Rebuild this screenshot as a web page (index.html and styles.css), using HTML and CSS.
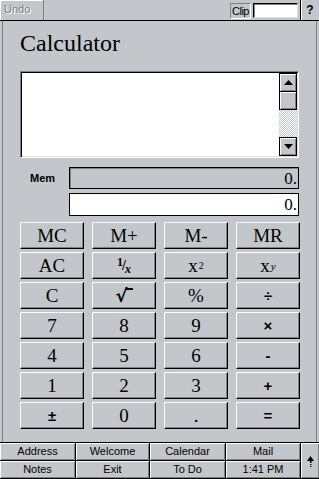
FILE: index.html
```html
<!DOCTYPE html>
<html>
<head>
<meta charset="utf-8">
<link rel="stylesheet" href="styles.css">
</head>
<body>
<div class="app">
  <div class="topbar">
    <div class="undo">Undo</div>
    <div class="spacer"></div>
    <div class="clip">Clip</div>
    <div class="clipbox"></div>
    <div class="help">?</div>
  </div>
  <div class="main">
    <h1 class="title">Calculator</h1>
    <div class="tape">
      <div class="tape-text"></div>
      <div class="scroll">
        <div class="sbtn"><svg width="9" height="5" viewBox="0 0 9 5"><polygon points="0,5 9,5 4.5,0" fill="#000"/></svg></div>
        <div class="sbtn thumb"></div>
        <div class="track"></div>
        <div class="sbtn"><svg width="9" height="5" viewBox="0 0 9 5"><polygon points="0,0 9,0 4.5,5" fill="#000"/></svg></div>
      </div>
    </div>
    <div class="memrow">
      <span class="memlabel">Mem</span>
      <div class="display mem">0.</div>
    </div>
    <div class="memrow second">
      <span class="memlabel"></span>
      <div class="display entry">0.</div>
    </div>
    <div class="keys">
      <div class="key">MC</div>
      <div class="key">M+</div>
      <div class="key">M-</div>
      <div class="key">MR</div>
      <div class="key">AC</div>
      <div class="key"><span class="frac"><span class="num">1</span><span class="sl">/</span><span class="den">x</span></span></div>
      <div class="key">x<sup class="pw">2</sup></div>
      <div class="key">x<sup class="pw it">y</sup></div>
      <div class="key">C</div>
      <div class="key"><span class="sqrt">√<span class="bar"></span></span></div>
      <div class="key">%</div>
      <div class="key op">÷</div>
      <div class="key">7</div>
      <div class="key">8</div>
      <div class="key">9</div>
      <div class="key op">×</div>
      <div class="key">4</div>
      <div class="key">5</div>
      <div class="key">6</div>
      <div class="key op">-</div>
      <div class="key">1</div>
      <div class="key">2</div>
      <div class="key">3</div>
      <div class="key op">+</div>
      <div class="key op">±</div>
      <div class="key">0</div>
      <div class="key">.</div>
      <div class="key op">=</div>
    </div>
  </div>
  <div class="bottombar">
    <div class="tab">Address</div>
    <div class="tab">Welcome</div>
    <div class="tab">Calendar</div>
    <div class="tab">Mail</div>
    <div class="tab arrow"><svg width="7" height="13" viewBox="0 0 7 13"><polygon points="0,5 7,5 3.5,0" fill="#000"/><rect x="3" y="5" width="1.5" height="2" fill="#000"/><rect x="3" y="8" width="1.5" height="1" fill="#000"/><rect x="3" y="10" width="1.5" height="1" fill="#000"/></svg></div>
    <div class="tab">Notes</div>
    <div class="tab">Exit</div>
    <div class="tab">To Do</div>
    <div class="tab">1:41 PM</div>
  </div>
</div>
</body>
</html>
```
FILE: styles.css
```css
* { box-sizing: border-box; }
html, body { margin: 0; padding: 0; }
body {
  width: 319px;
  height: 479px;
  overflow: hidden;
  background: #c3c7cb;
  font-family: "Liberation Sans", Arial, sans-serif;
  color: #000;
}
.app { display: flex; flex-direction: column; height: 479px; }

/* top bar */
.topbar {
  display: flex;
  height: 21px;
  border-bottom: 1px solid #000;
  flex: none;
}
.undo {
  width: 44px;
  border-right: 1px solid #808080;
  box-shadow: inset 1px 1px 0 #fff;
  font-size: 11px;
  line-height: 19px;
  padding-left: 4px;
  color: #808080;
  text-shadow: 1px 1px 0 #fff;
}
.spacer { flex: 1; }
.clip {
  width: 21px;
  height: 16px;
  margin-top: 3px;
  border: 1px solid;
  border-color: #808080 #fff #fff #808080;
  font-size: 11px;
  line-height: 14px;
  text-align: center;
  letter-spacing: -0.5px;
}
.clipbox {
  width: 45px;
  height: 15px;
  margin: 3px 2px 0 2px;
  background: #fff;
  border: 1px solid;
  border-color: #000 #dfdfdf #dfdfdf #000;
  box-shadow: inset 1px 1px 0 #808080;
}
.help {
  width: 19px;
  border-left: 1px solid #000;
  box-shadow: inset 1px 0 0 #fff;
  font-weight: bold;
  font-size: 12px;
  line-height: 20px;
  text-align: center;
}

/* main panel */
.main {
  flex: none;
  height: 421px;
  margin: 0 2px;
  border-left: 1px solid #808080;
  border-right: 1px solid #808080;
  padding: 8px 0 0 17px;
}
.title {
  margin: 0;
  height: 28px;
  font-family: "Liberation Serif", "Times New Roman", serif;
  font-weight: normal;
  font-size: 24px;
  line-height: 28px;
}
.tape {
  margin-top: 14px;
  width: 279px;
  height: 87px;
  display: flex;
  background: #fff;
  border: 1px solid;
  border-color: #808080 #fff #fff #808080;
  box-shadow: inset 1px 1px 0 #000, inset -1px -1px 0 #dfdfdf;
  padding: 1px 1px 1px 1px;
}
.tape-text { flex: 1; }
.scroll {
  width: 18px;
  display: flex;
  flex-direction: column;
}
.sbtn {
  height: 19px;
  flex: none;
  background: #c3c7cb;
  border: 1px solid #000;
  box-shadow: inset 1px 1px 0 #fff, inset -1px -1px 0 #808080;
  display: flex;
  align-items: center;
  justify-content: center;
}
.sbtn svg { display: block; }
.thumb { margin-top: -1px; }
.track {
  flex: 1;
  background: repeating-conic-gradient(#fff 0 25%, #c3c7cb 0 50%) 0 0 / 2px 2px;
}

/* memory rows */
.memrow {
  display: flex;
  align-items: center;
  margin-top: 9px;
}
.memrow.second { margin-top: 4px; }
.memlabel {
  width: 49px;
  padding-left: 10px;
  font-weight: bold;
  font-size: 11px;
}
.display {
  width: 230px;
  height: 22px;
  border: 1px solid #000;
  text-align: right;
  padding-right: 1px;
  font-family: "Liberation Serif", "Times New Roman", serif;
  font-size: 17px;
  line-height: 21px;
}
.display.mem { background: #c3c7cb; box-shadow: inset 1px 1px 0 #808080; }
.display.entry { background: #fff; height: 23px; }

/* keypad */
.keys {
  margin-top: 6px;
  width: 280px;
  display: grid;
  grid-template-columns: repeat(4, 64px);
  grid-auto-rows: 27px;
  column-gap: 8px;
  row-gap: 3px;
}
.key {
  background: #c3c7cb;
  border-top: 1px solid #fff;
  border-left: 1px solid #fff;
  border-right: 1px solid #000;
  border-bottom: 1px solid #000;
  box-shadow: inset -1px -1px 0 #808080;
  display: flex;
  align-items: center;
  justify-content: center;
  font-family: "Liberation Serif", "Times New Roman", serif;
  font-size: 19px;
  line-height: 25px;
}
.key.op {
  font-family: "Liberation Sans", Arial, sans-serif;
  font-weight: bold;
  font-size: 15px;
}
.pw {
  font-size: 10px;
  line-height: 0;
  vertical-align: 8px;
  margin-left: 1px;
}
.pw.it { font-style: italic; font-size: 11px; }
.frac {
  display: inline-flex;
  align-items: center;
  font-weight: bold;
  font-size: 12px;
  line-height: 12px;
}
.frac .num { position: relative; top: -4px; }
.frac .sl { font-size: 14px; margin: 0 -1px; }
.frac .den { position: relative; top: 3px; font-style: italic; }
.sqrt {
  display: inline-flex;
  align-items: flex-start;
  font-family: "DejaVu Sans", sans-serif;
  font-weight: bold;
  font-size: 18px;
  line-height: 20px;
}
.sqrt .bar {
  width: 7px;
  height: 2px;
  background: #000;
  margin-top: 2px;
  margin-left: -2px;
}

/* bottom bar */
.bottombar {
  flex: none;
  border-top: 1px solid #000;
  display: grid;
  grid-template-columns: 76px 74px 76px 75px 18px;
  grid-template-rows: 18px 18px;
}
.tab {
  background: #c3c7cb;
  border-right: 1px solid #000;
  border-bottom: 1px solid #000;
  box-shadow: inset 1px 1px 0 #fff, inset -1px -1px 0 #808080;
  font-size: 11px;
  line-height: 16px;
  text-align: center;
}
.tab.arrow {
  grid-column: 5;
  grid-row: 1 / span 2;
  border-right: none;
  display: flex;
  align-items: center;
  justify-content: center;
}
.tab.arrow svg { display: block; margin-top: 4px; }
```
